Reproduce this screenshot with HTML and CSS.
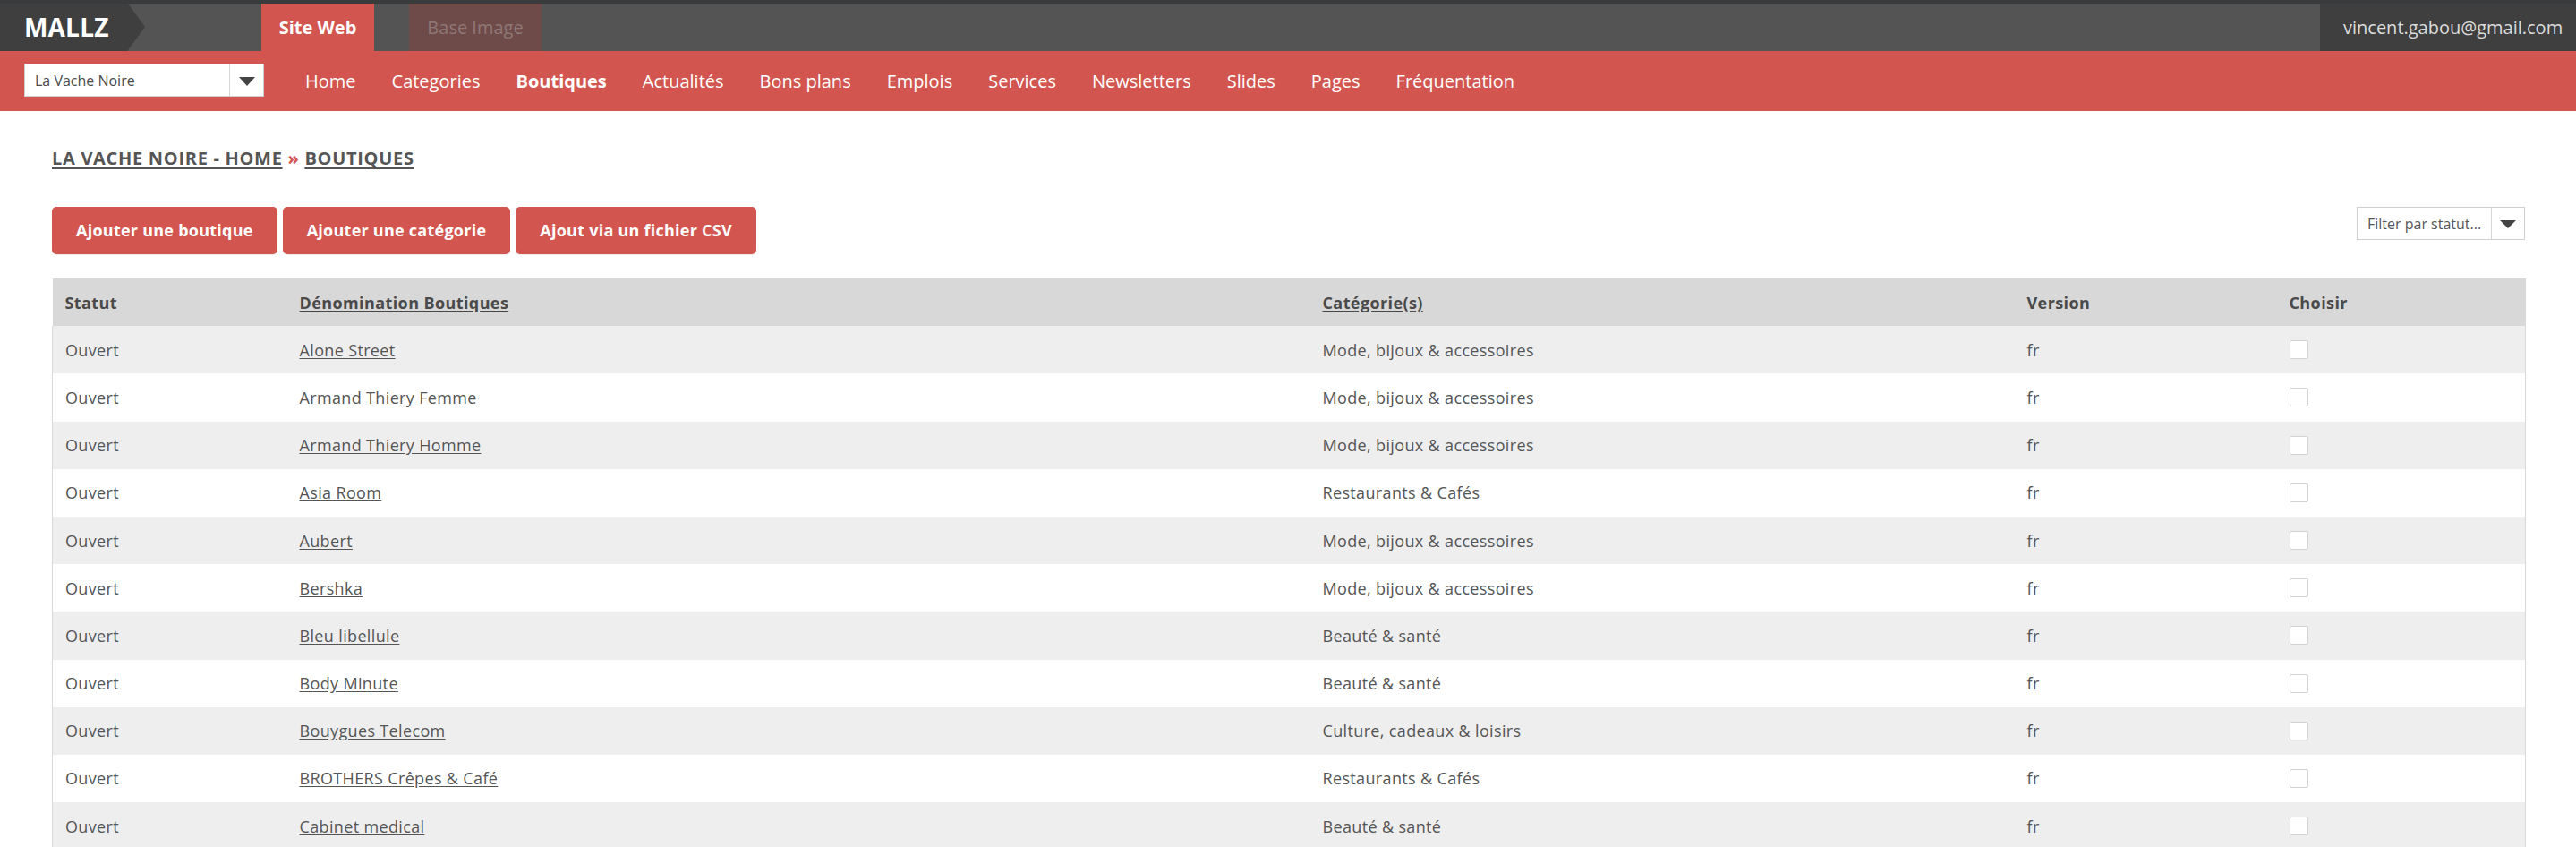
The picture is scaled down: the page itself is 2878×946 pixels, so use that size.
FILE: index.html
```html
<!DOCTYPE html>
<html lang="fr">
<head>
<meta charset="utf-8">
<title>MALLZ - Boutiques</title>
<link rel="stylesheet" href="styles.css">
</head>
<body>
<header class="topbar">
  <div class="logo">MALLZ</div>
  <nav class="tabs">
    <a class="tab tab-active" href="#">Site Web</a>
    <a class="tab tab-muted" href="#">Base Image</a>
  </nav>
  <div class="user">vincent.gabou@gmail.com</div>
</header>
<div class="navbar">
  <div class="select select-site">
    <span class="select-text">La Vache Noire</span>
    <span class="select-arrow"><span class="tri"></span></span>
  </div>
  <ul class="menu">
    <li><a href="#">Home</a></li>
    <li><a href="#">Categories</a></li>
    <li><a class="current" href="#">Boutiques</a></li>
    <li><a href="#">Actualités</a></li>
    <li><a href="#">Bons plans</a></li>
    <li><a href="#">Emplois</a></li>
    <li><a href="#">Services</a></li>
    <li><a href="#">Newsletters</a></li>
    <li><a href="#">Slides</a></li>
    <li><a href="#">Pages</a></li>
    <li><a href="#">Fréquentation</a></li>
  </ul>
</div>
<main class="content">
  <div class="breadcrumb"><a href="#">LA VACHE NOIRE - HOME</a> <span class="sep">»</span> <a href="#">BOUTIQUES</a></div>
  <div class="toolbar">
    <div class="actions">
      <a class="btn" href="#">Ajouter une boutique</a>
      <a class="btn" href="#">Ajouter une catégorie</a>
      <a class="btn" href="#">Ajout via un fichier CSV</a>
    </div>
    <div class="select select-filter">
      <span class="select-text">Filter par statut...</span>
      <span class="select-arrow"><span class="tri"></span></span>
    </div>
  </div>
  <table class="grid">
    <colgroup>
      <col class="c1"><col class="c2"><col class="c3"><col class="c4"><col class="c5">
    </colgroup>
    <thead>
      <tr><th>Statut</th><th><a href="#">Dénomination Boutiques</a></th><th><a href="#">Catégorie(s)</a></th><th>Version</th><th>Choisir</th></tr>
    </thead>
    <tbody>
      <tr><td>Ouvert</td><td><a href="#">Alone Street</a></td><td>Mode, bijoux &amp; accessoires</td><td>fr</td><td><span class="check"></span></td></tr>
      <tr><td>Ouvert</td><td><a href="#">Armand Thiery Femme</a></td><td>Mode, bijoux &amp; accessoires</td><td>fr</td><td><span class="check"></span></td></tr>
      <tr><td>Ouvert</td><td><a href="#">Armand Thiery Homme</a></td><td>Mode, bijoux &amp; accessoires</td><td>fr</td><td><span class="check"></span></td></tr>
      <tr><td>Ouvert</td><td><a href="#">Asia Room</a></td><td>Restaurants &amp; Cafés</td><td>fr</td><td><span class="check"></span></td></tr>
      <tr><td>Ouvert</td><td><a href="#">Aubert</a></td><td>Mode, bijoux &amp; accessoires</td><td>fr</td><td><span class="check"></span></td></tr>
      <tr><td>Ouvert</td><td><a href="#">Bershka</a></td><td>Mode, bijoux &amp; accessoires</td><td>fr</td><td><span class="check"></span></td></tr>
      <tr><td>Ouvert</td><td><a href="#">Bleu libellule</a></td><td>Beauté &amp; santé</td><td>fr</td><td><span class="check"></span></td></tr>
      <tr><td>Ouvert</td><td><a href="#">Body Minute</a></td><td>Beauté &amp; santé</td><td>fr</td><td><span class="check"></span></td></tr>
      <tr><td>Ouvert</td><td><a href="#">Bouygues Telecom</a></td><td>Culture, cadeaux &amp; loisirs</td><td>fr</td><td><span class="check"></span></td></tr>
      <tr><td>Ouvert</td><td><a href="#">BROTHERS Crêpes &amp; Café</a></td><td>Restaurants &amp; Cafés</td><td>fr</td><td><span class="check"></span></td></tr>
      <tr><td>Ouvert</td><td><a href="#">Cabinet medical</a></td><td>Beauté &amp; santé</td><td>fr</td><td><span class="check"></span></td></tr>
    </tbody>
  </table>
</main>
</body>
</html>
```
FILE: styles.css
```css
* { box-sizing: border-box; }
html, body { margin: 0; padding: 0; }
body {
  font-family: "Open Sans", "Liberation Sans", sans-serif;
  color: #555;
  background: #fff;
  overflow: hidden;
  height: 946px;
}
a { color: inherit; }

/* top bar */
.topbar {
  display: flex;
  height: 57px;
  background: #545454;
  border-top: 4px solid #3a3b3d;
}
.logo {
  position: relative;
  width: 143px;
  background: #3f3f3f;
  color: #fff;
  font-weight: 700;
  font-size: 28px;
  line-height: 53px;
  padding-left: 27px;
  letter-spacing: 0.2px;
}
.logo::after {
  content: "";
  position: absolute;
  left: 143px;
  top: 0;
  border-left: 19px solid #3f3f3f;
  border-top: 26.5px solid transparent;
  border-bottom: 26.5px solid transparent;
}
.tabs {
  display: flex;
  gap: 39px;
  margin-left: 149px;
  flex: 1;
}
.tab {
  display: block;
  height: 53px;
  line-height: 53px;
  font-size: 20px;
  text-decoration: none;
}
.tab-active {
  width: 126px;
  text-align: center;
  background: #d2564f;
  color: #fff;
  font-weight: 700;
}
.tab-muted {
  width: 148px;
  text-align: center;
  background: #6e4a48;
  color: #8e7876;
}
.user {
  width: 286px;
  background: #3f3f3f;
  color: #dcdcdc;
  font-size: 20px;
  line-height: 53px;
  padding-left: 26px;
}

/* nav bar */
.navbar {
  display: flex;
  align-items: center;
  height: 67px;
  background: #d2564f;
  padding-left: 27px;
}
.select {
  display: flex;
  background: #fff;
  border: 1px solid #cfcfcf;
}
.select-site {
  width: 268px;
  height: 37px;
  margin-top: -2px;
}
.select-text {
  flex: 1;
  font-size: 16px;
  color: #4a4a4a;
  display: flex;
  align-items: center;
  white-space: nowrap;
  overflow: hidden;
}
.select-site .select-text { padding-left: 11px; }
.select-arrow {
  display: flex;
  align-items: center;
  justify-content: center;
  width: 38px;
  border-left: 1px solid #d6d6d6;
}
.tri {
  width: 0;
  height: 0;
  border-left: 9px solid transparent;
  border-right: 9px solid transparent;
  border-top: 10px solid #444;
  margin-top: 2px;
}
.menu {
  display: flex;
  list-style: none;
  margin: 0 0 0 26px;
  padding: 0;
}
.menu a {
  display: block;
  padding: 0 20px;
  font-size: 20px;
  color: #fff;
  text-decoration: none;
  line-height: 30px;
}
.menu a.current { font-weight: 700; }

/* content */
.content {
  padding: 39px 57px 0 58px;
}
.breadcrumb {
  font-size: 20px;
  font-weight: 700;
  line-height: 28px;
  color: #555;
  letter-spacing: 0.7px;
}
.breadcrumb a { text-decoration: underline; text-underline-offset: 3px; }
.breadcrumb .sep { color: #d2564f; }
.toolbar {
  display: flex;
  justify-content: space-between;
  align-items: flex-start;
  margin-top: 40px;
}
.actions { display: flex; gap: 6px; }
.btn {
  display: block;
  height: 53px;
  line-height: 53px;
  padding: 0 27px;
  background: #d2564f;
  color: #fff;
  font-size: 18px;
  font-weight: 700;
  letter-spacing: 0.25px;
  text-decoration: none;
  border-radius: 5px;
  box-shadow: 0 1px 1px rgba(0,0,0,0.08);
}
.select-filter {
  width: 188px;
  height: 37px;
}
.select-filter .select-text { padding-left: 11px; font-size: 16px; color: #555; }
.select-filter .select-arrow { width: 37px; }
.select-filter .tri { border-left-width: 9px; border-right-width: 9px; border-top-width: 9px; }

/* table */
.grid {
  width: 100%;
  margin-top: 27px;
  border-collapse: collapse;
  table-layout: fixed;
}
.c1 { width: 262px; }
.c2 { width: 1143px; }
.c3 { width: 787px; }
.c4 { width: 293px; }
.c5 { width: 278px; }
.grid th, .grid td {
  height: 53.2px;
  padding: 0 14px;
  text-align: left;
  font-size: 18px;
  white-space: nowrap;
  letter-spacing: 0.35px;
}
.grid th {
  background: #d8d8d8;
  font-weight: 700;
  color: #4a4a4a;
  letter-spacing: 0.4px;
}
.grid td { color: #555; }
.grid tbody tr { border-left: 1px solid #d9d9d9; border-right: 1px solid #d9d9d9; }
.grid tbody tr:nth-child(odd) { background: #eeeeee; }
.grid tbody tr:nth-child(even) { background: #fff; }
.grid a { text-decoration: underline; text-underline-offset: 2px; }
.check {
  display: block;
  width: 21px;
  height: 21px;
  background: #fff;
  border: 1px solid #d3d3d3;
  border-radius: 2px;
}
```
